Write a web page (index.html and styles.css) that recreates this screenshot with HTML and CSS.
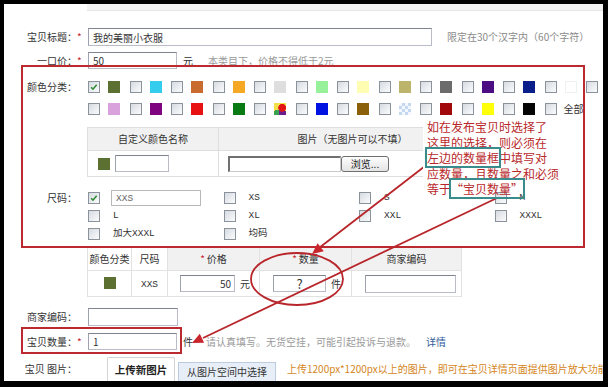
FILE: index.html
```html
<!DOCTYPE html>
<html lang="zh-CN">
<head>
<meta charset="utf-8">
<title>宝贝发布</title>
<link rel="stylesheet" href="styles.css">
</head>
<body>
<div class="page">
  <div class="topbar"></div>

  <div class="row row-title">
    <span class="lbl">宝贝标题：</span><span class="req">*</span>
    <input class="inp inp-title" type="text" value="我的美丽小衣服">
    <span class="hint hint-title">限定在30个汉字内（60个字符）</span>
  </div>

  <div class="row row-price">
    <span class="lbl">一口价：</span><span class="req">*</span>
    <input class="inp inp-price" type="text" value="50">
    <span class="unit">元</span>
    <span class="hint hint-price">本类目下，价格不得低于2元</span>
  </div>

  <div class="color-sec">
    <span class="lbl lbl-top">颜色分类：</span><span class="req"></span>
    <div class="swatches">
      <div class="sw-row">
        <span class="pair"><span class="cb checked"><svg viewBox="0 0 12 12"><path d="M2.6 6.2 L4.8 8.6 L9.2 3.4"/></svg></span><span class="sw" style="background:#5b7031"></span></span>
        <span class="pair"><span class="cb"></span><span class="sw" style="background:#35cdee"></span></span>
        <span class="pair"><span class="cb"></span><span class="sw" style="background:#c96b2e"></span></span>
        <span class="pair"><span class="cb"></span><span class="sw" style="background:#f6a723"></span></span>
        <span class="pair"><span class="cb"></span><span class="sw" style="background:#dedede"></span></span>
        <span class="pair"><span class="cb"></span><span class="sw" style="background:#97f09a"></span></span>
        <span class="pair"><span class="cb"></span><span class="sw" style="background:#fffdb2"></span></span>
        <span class="pair"><span class="cb"></span><span class="sw" style="background:#bdb46c"></span></span>
        <span class="pair"><span class="cb"></span><span class="sw" style="background:#6b6b6b"></span></span>
        <span class="pair"><span class="cb"></span><span class="sw" style="background:#4c0c82"></span></span>
        <span class="pair"><span class="cb"></span><span class="sw" style="background:#0b1f8a"></span></span>
        <span class="pair"><span class="cb"></span><span class="sw sw-white"></span></span>
        <span class="cb"></span>
      </div>
      <div class="sw-row sw-row2">
        <span class="pair"><span class="cb"></span><span class="sw" style="background:#d9a2dc"></span></span>
        <span class="pair"><span class="cb"></span><span class="sw" style="background:#7e057f"></span></span>
        <span class="pair"><span class="cb"></span><span class="sw" style="background:#e81212"></span></span>
        <span class="pair"><span class="cb"></span><span class="sw" style="background:#0a7b12"></span></span>
        <span class="pair"><span class="cb"></span><span class="sw sw-multi"></span></span>
        <span class="pair"><span class="cb"></span><span class="sw" style="background:#0012e2"></span></span>
        <span class="pair"><span class="cb"></span><span class="sw" style="background:#8b600a"></span></span>
        <span class="pair"><span class="cb"></span><span class="sw sw-check"></span></span>
        <span class="pair"><span class="cb"></span><span class="sw" style="background:#a1090a"></span></span>
        <span class="pair"><span class="cb"></span><span class="sw" style="background:#ffff0a"></span></span>
        <span class="pair"><span class="cb"></span><span class="sw" style="background:#050505"></span></span>
        <span class="cb"></span><span class="all">全部</span>
      </div>
    </div>
  </div>

  <table class="ctable">
    <tr class="ct-head"><th class="ct-c1">自定义颜色名称</th><th class="ct-c2">图片（无图片可以不填）</th></tr>
    <tr class="ct-body">
      <td class="ct-c1"><span class="cell-flex"><span class="sw sw-in" style="background:#5b7031"></span><input class="inp inp-cname" type="text" value=""></span></td>
      <td class="ct-c2"><span class="cell-flex"><span class="file"></span><span class="browse">浏览...</span></span></td>
    </tr>
  </table>

  <div class="sizes">
    <span class="lbl lbl-size">尺码：</span><span class="req"></span>
    <div class="size-grid">
      <span class="sz"><span class="cb checked"><svg viewBox="0 0 12 12"><path d="M2.6 6.2 L4.8 8.6 L9.2 3.4"/></svg></span><input class="inp inp-xxs" type="text" value="XXS"></span>
      <span class="sz"><span class="cb"></span><span class="szl">XS</span></span>
      <span class="sz"><span class="cb"></span><span class="szl">S</span></span>
      <span class="sz"><span class="cb"></span><span class="szl">M</span></span>
      <span class="sz"><span class="cb"></span><span class="szl">L</span></span>
      <span class="sz"><span class="cb"></span><span class="szl">XL</span></span>
      <span class="sz"><span class="cb"></span><span class="szl">XXL</span></span>
      <span class="sz"><span class="cb"></span><span class="szl">XXXL</span></span>
      <span class="sz"><span class="cb"></span><span class="szl">加大XXXL</span></span>
      <span class="sz"><span class="cb"></span><span class="szl">均码</span></span>
    </div>
  </div>

  <table class="sku">
    <tr class="sku-head">
      <th class="k1">颜色分类</th><th class="k2">尺码</th>
      <th class="k3 gray"><span class="star">*</span>价格</th>
      <th class="k4 gray"><span class="star">*</span>数量</th>
      <th class="k5 gray">商家编码</th>
    </tr>
    <tr class="sku-body">
      <td class="k1"><span class="sw sw-sku" style="background:#5b7031"></span></td>
      <td class="k2"><span class="szl">XXS</span></td>
      <td class="k3"><span class="cell-flex"><input class="inp inp-skuprice" type="text" value="50"><span class="unit2">元</span></span></td>
      <td class="k4"><span class="cell-flex"><input class="inp inp-qty" type="text" value="?"><span class="unit2">件</span></span></td>
      <td class="k5"><span class="cell-flex"><input class="inp inp-code" type="text" value=""></span></td>
    </tr>
  </table>

  <div class="row row-code">
    <span class="lbl">商家编码：</span><span class="req"></span>
    <input class="inp inp-merch" type="text" value="">
  </div>

  <div class="row row-num">
    <span class="lbl">宝贝数量：</span><span class="req">*</span>
    <input class="inp inp-num" type="text" value="1">
    <span class="unit">件</span>
    <span class="hint hint-num">请认真填写。无货空挂，可能引起投诉与退款。</span>
    <a class="link">详情</a>
  </div>

  <div class="row row-pic">
    <span class="lbl">宝贝 图片：</span><span class="req"></span>
    <span class="tab tab-on">上传新图片</span>
    <span class="tab tab-off">从图片空间中选择</span>
    <span class="pic-tip">上传1200px*1200px以上的图片，即可在宝贝详情页面提供图片放大功能</span>
  </div>
</div>

<svg class="overlay" width="608" height="387" viewBox="0 0 608 387">
  <rect x="22" y="66" width="562" height="181" class="red-box"/>
  <rect x="22" y="328" width="159" height="25" class="red-box"/>
  <ellipse cx="297" cy="279" rx="46" ry="26" class="red-line"/>
  <line x1="429" y1="163" x2="319" y2="248" class="red-line"/>
  <polygon points="312,254 323.8,251.2 317.6,243.3" class="red-fill"/>
  <line x1="497" y1="198" x2="203" y2="338" class="red-line"/>
  <polygon points="192,343 204.1,342.8 199.8,333.8" class="red-fill"/>
</svg>

<div class="note">如在发布宝贝时选择了<br>这里的选择，则必须在<br><span class="tbox tbox1">左边的数量框</span>中填写对<br>应数量，且数量之和必须<br>等于<span class="tbox tbox2">“宝贝数量”</span></div>
</body>
</html>
```

FILE: styles.css
```css
html { background: #000; }
body {
  margin: 0;
  padding: 4px 5px 6px 4px;
  width: 599px;
  height: 377px;
  background: #000;
  position: relative;
  overflow: hidden;
  font-family: "Noto Sans CJK SC", "Noto Sans", sans-serif;
  font-size: 10px;
  line-height: 1.2;
  color: #333;
}
.page {
  width: 599px;
  height: 377px;
  background: #fff;
  overflow: hidden;
}
.topbar {
  margin-left: 83px;
  height: 7px;
  background: #f3f3f3;
  border-bottom: 1px solid #e6e6e6;
  box-sizing: border-box;
}
.row { display: flex; align-items: center; }
.lbl { width: 73px; flex: none; text-align: right; white-space: nowrap; color: #333; }
.req { width: 10px; flex: none; color: #c8262c; font-size: 10px; }
.inp {
  box-sizing: border-box;
  margin: 0 0 0 1px;
  padding: 0 4px;
  border: 1px solid #b9bcc6;
  border-top-color: #7f838f;
  border-left-color: #9ea2ad;
  background: #fff;
  font-family: "Noto Sans CJK SC", "Noto Sans", sans-serif;
  font-size: 10px;
  color: #333;
  outline: none;
  flex: none;
}
.hint { color: #8a8a8a; white-space: nowrap; }

.row-title { margin-top: 17px; height: 18px; }
.inp-title { width: 344px; height: 18px; }
.hint-title { margin-left: 15px; }

.row-price { margin-top: 6px; height: 17px; }
.inp-price { width: 89px; height: 17px; }
.unit { margin-left: 6px; color: #333; }
.hint-price { margin-left: 15px; color: #9a9a9a; }

.color-sec { display: flex; margin-top: 12px; }
.lbl-top { line-height: 12px; }
.swatches { margin-left: 1px; }
.sw-row { display: flex; align-items: center; height: 12px; }
.sw-row2 { margin-top: 10px; }
.pair { display: flex; width: 41.5px; flex: none; }
.cb {
  width: 12px;
  height: 12px;
  box-sizing: border-box;
  border: 1px solid #8a929c;
  background: linear-gradient(135deg, #d6dbe1, #fbfbfc);
  flex: none;
  display: inline-block;
  position: relative;
}
.cb svg { position: absolute; left: 0; top: 0; width: 10px; height: 10px; }
.cb svg path { fill: none; stroke: #2f8a34; stroke-width: 1.9; }
.sw { width: 12px; height: 12px; margin-left: 8px; flex: none; display: inline-block; }
.sw-white { background: #fff; box-shadow: inset 0 0 0 1px #f0f0f0; }
.sw-multi {
  background:
    radial-gradient(circle at 68% 40%, #e21414 0 3.6px, transparent 4.2px),
    conic-gradient(from 0deg at 45% 60%, #f3df4a 0 28%, #6b1f8f 28% 52%, #38a04e 52% 74%, #f3df4a 74%);
}
.sw-check {
  background: repeating-conic-gradient(#c4d8f2 0 25%, #f4f8fd 0 50%) 0 0 / 6px 6px;
}
.all { margin-left: 7px; white-space: nowrap; }

.ctable {
  margin: 12px 0 0 83px;
  border-collapse: collapse;
  width: 400px;
  table-layout: fixed;
}
.ctable th, .ctable td { border: 1px solid #dedede; padding: 0; }
.ct-head th { height: 22px; background: #f1f1f1; font-weight: normal; color: #333; text-align: center; }
.ct-c1 { width: 130px; }
.ct-body td { height: 25px; }
.cell-flex { display: flex; align-items: center; }
.sw-in { margin-left: 10px; }
.inp-cname { width: 54px; height: 17px; margin-left: 5px; }
.file {
  width: 113px;
  height: 16px;
  margin-left: 9px;
  box-sizing: border-box;
  border: 1px solid #c9c9c9;
  border-top: 2px solid #707070;
  border-left: 2px solid #707070;
}
.browse {
  width: 48px;
  height: 16px;
  box-sizing: border-box;
  margin-left: 0;
  border: 1px solid #6f6f6f;
  border-radius: 3px;
  background: linear-gradient(#fdfdfd, #e4e4e4);
  text-align: center;
  line-height: 14px;
  color: #222;
}

.sizes { display: flex; margin-top: 12px; }
.lbl-size { line-height: 18px; }
.size-grid {
  display: grid;
  grid-template-columns: repeat(4, 135.5px);
  grid-auto-rows: 18px;
  margin-left: 1px;
}
.sz { display: flex; align-items: center; }
.szl { margin-left: 13px; font-family: "Liberation Mono", "Noto Sans CJK SC", monospace; font-size: 9.5px; color: #333; white-space: nowrap; }
.inp-xxs {
  width: 90px;
  height: 16px;
  margin-left: 11px;
  border-color: #b8b8b8;
  font-family: "Liberation Mono", monospace;
  font-size: 9.5px;
  color: #666;
}

.sku {
  margin: 4px 0 0 83px;
  border-collapse: collapse;
  table-layout: fixed;
  width: 375px;
}
.sku th, .sku td { border: 1px solid #e2e2e2; padding: 0; }
.sku-head th { height: 22px; font-weight: normal; color: #333; text-align: center; }
.sku-head th.k1, .sku-head th.k2 { border-top-color: transparent; }
.sku-head .gray { background: #f1f1f1; }
.sku-head .k1, .sku-head .k2 { background: #fff; }
.sku-body td { height: 25px; text-align: center; }
.k1 { width: 43px; }
.k2 { width: 35px; }
.k3 { width: 91px; }
.k4 { width: 91px; }
.star { color: #c8262c; margin-right: 2px; }
.sw-sku { margin-left: 0; }
.sku-body .szl { margin-left: 0; }
.inp-skuprice { width: 55px; height: 17px; margin-left: 12px; text-align: right; padding-right: 3px; }
.unit2 { margin-left: 5px; }
.inp-qty { width: 53px; height: 17px; margin-left: 13px; text-align: center; font-size: 13px; line-height: 15px; padding: 0; color: #333; }
.inp-code { width: 91px; height: 18px; margin-left: 13px; }

.row-code { margin-top: 11px; height: 18px; }
.inp-merch { width: 90px; height: 18px; }

.row-num { margin-top: 7px; height: 17px; }
.inp-num { width: 89px; height: 17px; }
.hint-num { margin-left: 13px; color: #9a9a9a; }
.link { margin-left: 10px; color: #2f5d9a; white-space: nowrap; }

.row-pic { margin-top: 7px; height: 24px; align-items: center; }
.tab {
  box-sizing: border-box;
  flex: none;
  text-align: center;
  white-space: nowrap;
}
.tab-on {
  margin-left: 20px;
  width: 68px;
  height: 24px;
  line-height: 23px;
  border: 1px solid #d4d4d4;
  border-bottom: none;
  border-radius: 2px 2px 0 0;
  background: #fff;
  font-weight: bold;
  font-size: 10.5px;
  color: #222;
}
.tab-off {
  margin-left: 3px;
  width: 98px;
  height: 19px;
  line-height: 18px;
  align-self: flex-end;
  border: 1px solid #bccbe0;
  border-bottom: none;
  background: #e8eef7;
  color: #333;
}
.pic-tip { margin-left: 11px; color: #d4861c; white-space: nowrap; }

.overlay { position: absolute; left: 0; top: 0; pointer-events: none; }
.red-box { fill: none; stroke: #bb2a2e; stroke-width: 2; }
.red-line { fill: none; stroke: #b8262b; stroke-width: 1.8; }
.red-fill { fill: #c8262c; }

.note {
  position: absolute;
  left: 423px;
  top: 119px;
  width: 137px;
  height: 72px;
  padding-left: 4px;
  background: #fff;
  color: #b8282b;
  font-size: 12px;
  line-height: 15.5px;
  white-space: nowrap;
  font-family: "Noto Sans CJK SC", sans-serif;
}
.tbox { outline: 2px solid #3a8c8c; outline-offset: 0; }
```
